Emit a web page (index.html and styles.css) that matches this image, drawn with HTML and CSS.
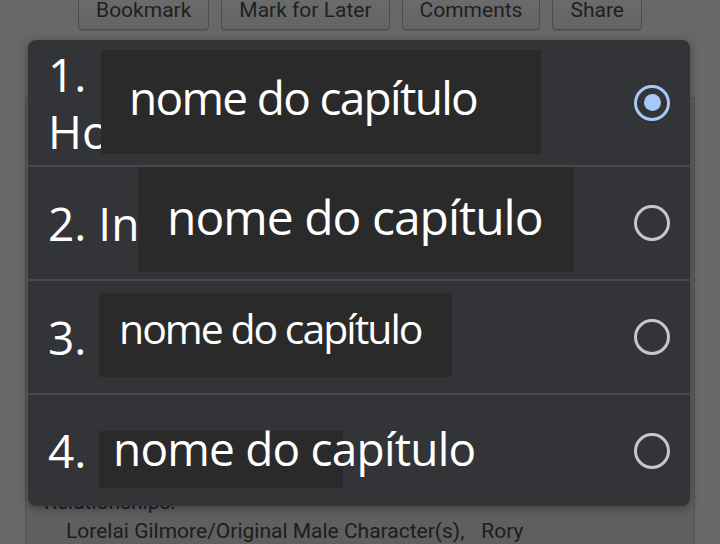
FILE: index.html
```html
<!DOCTYPE html>
<html lang="pt">
<head>
<meta charset="utf-8">
<title>Chapter index</title>
<link rel="stylesheet" href="styles.css">
</head>
<body>
<div class="page">
  <div class="actions">
    <button class="btn">Bookmark</button>
    <button class="btn">Mark for Later</button>
    <button class="btn">Comments</button>
    <button class="btn">Share</button>
  </div>
  <div class="work-card">
    <div class="meta-label">Relationships:</div>
    <div class="meta-value">
      <span class="tag">Lorelai Gilmore/Original Male Character(s),</span>
      <span class="tag">Rory</span>
    </div>
  </div>
</div>

<div class="dialog">
  <div class="row row-first">
    <div class="label">1.<br>Ho</div>
    <span class="radio selected"></span>
  </div>
  <div class="row">
    <div class="label">2. In</div>
    <span class="radio"></span>
  </div>
  <div class="row">
    <div class="label">3.</div>
    <span class="radio"></span>
  </div>
  <div class="row row-last">
    <div class="label">4.</div>
    <span class="radio"></span>
  </div>

  <div class="mask mask-1">nome do capítulo</div>
  <div class="mask mask-2">nome do capítulo</div>
  <div class="mask mask-3">nome do capítulo</div>
  <div class="mask mask-4">nome do capítulo</div>
</div>
</body>
</html>
```

FILE: styles.css
```css
html, body {
  margin: 0;
  padding: 0;
}

body {
  width: 720px;
  height: 544px;
  overflow: hidden;
  background: #686868;
  font-family: "Roboto", "Liberation Sans", sans-serif;
  position: relative;
}

.page {
  display: flex;
  flex-direction: column;
  height: 544px;
  overflow: hidden;
}

.actions {
  display: flex;
  justify-content: center;
  gap: 12px;
  margin-top: -7px;
}

.btn {
  font-family: "Roboto", "Liberation Sans", sans-serif;
  font-size: 21px;
  line-height: 24px;
  color: #1f1f1f;
  padding: 4px 17px 7px;
  border: 1px solid #4e4e4e;
  border-radius: 4px;
  background: linear-gradient(#6c6c6c, #646464);
  box-shadow: 0 1px 0 rgba(0, 0, 0, 0.15);
}

.work-card {
  flex: 1;
  margin: 67px 25px 0;
  background: #5f5f5f;
  border: 1px solid #555555;
  border-bottom: none;
  padding: 390px 0 0 18px;
  color: #1c1c1c;
}

.meta-label {
  font-size: 21px;
  line-height: 28px;
}

.meta-value {
  margin-top: 1px;
  padding-left: 22px;
  font-size: 21px;
  line-height: 28px;
  display: flex;
  gap: 17px;
}

/* Dialog overlay */
.dialog {
  position: absolute;
  left: 28px;
  top: 40px;
  width: 662px;
  height: 466px;
  background: #333437;
  border-radius: 8px;
  box-shadow: 0 2px 10px rgba(0, 0, 0, 0.35);
  display: flex;
  flex-direction: column;
  overflow: hidden;
  font-family: "Open Sans", "Noto Sans", sans-serif;
  color: #ffffff;
}

.row {
  box-sizing: border-box;
  height: 114px;
  border-top: 2px solid #47484b;
  display: flex;
  align-items: center;
  padding: 0 20px 0 20px;
}

.row-first {
  height: 125px;
  border-top: none;
}

.row-last {
  height: 113px;
}

.label {
  flex: 1;
  font-size: 46px;
  line-height: 57px;
  white-space: nowrap;
}

.radio {
  box-sizing: border-box;
  width: 36px;
  height: 36px;
  border: 3.5px solid #c6c7c8;
  border-radius: 50%;
  display: flex;
  align-items: center;
  justify-content: center;
}

.radio.selected {
  border-color: #a8c7fa;
}

.radio.selected::after {
  content: "";
  width: 17px;
  height: 17px;
  border-radius: 50%;
  background: #a8c7fa;
}

/* Redaction boxes laid over the titles */
.mask {
  position: absolute;
  background: #2a2a2a;
  color: #ffffff;
  white-space: nowrap;
  box-sizing: border-box;
}

.mask-1 {
  left: 73px;
  top: 10px;
  width: 440px;
  height: 104px;
  padding-left: 28px;
  font-size: 46px;
  line-height: 94px;
  letter-spacing: -1.7px;
}

.mask-2 {
  left: 110px;
  top: 127px;
  width: 436px;
  height: 105px;
  padding-left: 29px;
  font-size: 48px;
  line-height: 99px;
  letter-spacing: -1.0px;
}

.mask-3 {
  left: 71px;
  top: 253px;
  width: 353px;
  height: 84px;
  padding-left: 20px;
  font-size: 41px;
  line-height: 70px;
  letter-spacing: -2.0px;
}

.mask-4 {
  left: 71px;
  top: 391px;
  width: 244px;
  height: 57px;
  padding-left: 14px;
  font-size: 46px;
  line-height: 34px;
  letter-spacing: -0.8px;
}
```
